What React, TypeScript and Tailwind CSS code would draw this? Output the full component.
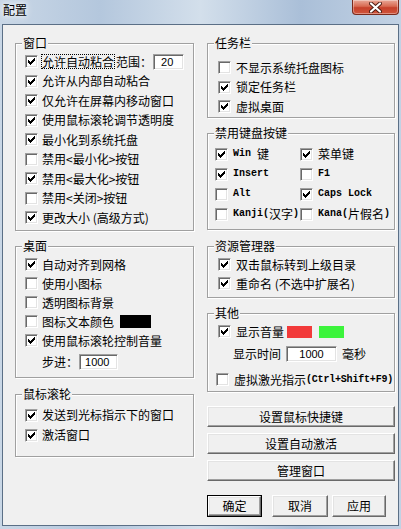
import React from "react";

const mono = "font-['Liberation_Mono','Noto_Sans_CJK_SC',monospace] text-[10px] font-bold";

const Check = ({ checked }: { checked?: boolean }) => (
    <span className="flex h-[13px] w-[13px] shrink-0 items-center justify-center border border-t-[#a0a0a0] border-l-[#a0a0a0] border-b-white border-r-white bg-white shadow-[inset_1px_1px_0_#696969,inset_-1px_-1px_0_#e3e3e3]">
        {checked && (
            <svg width="7" height="7" viewBox="0 0 7 7" shapeRendering="crispEdges">
                <rect x="0" y="2" width="1" height="3" fill="#000" />
                <rect x="1" y="3" width="1" height="3" fill="#000" />
                <rect x="2" y="4" width="1" height="3" fill="#000" />
                <rect x="3" y="3" width="1" height="3" fill="#000" />
                <rect x="4" y="2" width="1" height="3" fill="#000" />
                <rect x="5" y="1" width="1" height="3" fill="#000" />
                <rect x="6" y="0" width="1" height="3" fill="#000" />
            </svg>
        )}
    </span>
);

const Row = ({
    checked,
    children,
    className = "",
    gap = "gap-[4px]",
}: {
    checked?: boolean;
    children: React.ReactNode;
    className?: string;
    gap?: string;
}) => (
    <div className={`flex items-center ${gap} ${className}`}>
        <Check checked={checked} />
        <span className="flex items-center whitespace-nowrap">{children}</span>
    </div>
);

const Group = ({
    title,
    className = "",
    children,
}: {
    title: string;
    className?: string;
    children: React.ReactNode;
}) => (
    <div
        className={`relative border border-[#a0a0a0] shadow-[inset_1px_1px_0_#fff,1px_1px_0_#fff] ${className}`}
    >
        <span className="absolute left-[6px] top-[-7px] bg-[#f0f0f0] px-[1px] leading-[12px]">
            {title}
        </span>
        {children}
    </div>
);

const TextBox = ({ value, className = "" }: { value: string; className?: string }) => (
    <span
        className={`flex h-[16px] items-center border border-t-[#a0a0a0] border-l-[#a0a0a0] border-b-white border-r-white bg-white font-['Liberation_Sans',sans-serif] text-[11px] shadow-[inset_1px_1px_0_#696969,inset_-1px_-1px_0_#e3e3e3] ${className}`}
    >
        {value}
    </span>
);

const Button = ({
    children,
    className = "",
    isDefault,
}: {
    children: React.ReactNode;
    className?: string;
    isDefault?: boolean;
}) => (
    <div className={`${isDefault ? "border border-black" : ""} ${className}`}>
        <div className="flex h-full w-full items-center justify-center border border-t-white border-l-white border-b-[#696969] border-r-[#696969] bg-[#f0f0f0] shadow-[inset_-1px_-1px_0_#a0a0a0,inset_1px_1px_0_#e3e3e3]">
            {children}
        </div>
    </div>
);

const CloseButton = () => (
    <div className="flex h-[15px] w-[47px] items-center justify-center rounded-b-[4px] border border-t-0 border-[#7a2a1c] bg-[linear-gradient(180deg,#e9a898_0%,#d86a52_45%,#c6402a_55%,#d0553c_100%)] shadow-[inset_0_0_0_1px_rgba(255,255,255,0.35)]">
        <svg width="13" height="11" viewBox="0 0 13 11">
            <path d="M2 1.5 L11 9.5 M11 1.5 L2 9.5" stroke="#4a1a12" strokeWidth="4" strokeLinecap="round" />
            <path d="M2 1.5 L11 9.5 M11 1.5 L2 9.5" stroke="#fff" strokeWidth="2.2" strokeLinecap="round" />
        </svg>
    </div>
);

export default function App() {
    return (
        <div className="flex h-[529px] w-[401px] flex-col bg-[linear-gradient(90deg,#c9d7e6_0%,#b4c7dd_25%,#d3dfeb_50%,#aabfd8_75%,#c2d2e4_100%)] font-['Noto_Sans_CJK_SC',sans-serif] text-[12px] leading-[12px] text-black">
            <div className="flex h-[24px] shrink-0 items-start justify-between pl-[3px] pr-[2px]">
                <span className="mt-[4px] text-[12px] [text-shadow:0_0_5px_#fff,0_0_8px_#fff]">配置</span>
                <CloseButton />
            </div>

            <div className="mx-[2px] mb-[3px] flex flex-1 border border-[#5b6f86] bg-[#f0f0f0]">
                {/* left column */}
                <div className="ml-[12px] flex w-[179px] flex-col">
                    <Group title="窗口" className="mt-[18px] h-[188px] pl-[9px] pt-[8px]">
                        <div className="flex h-[19.5px] items-center">
                            <Check checked />
                            <span className="ml-[3px] border border-dotted border-black leading-[13px] whitespace-nowrap">
                                允许自动粘合
                            </span>
                            <span className="ml-[1px] whitespace-nowrap">范围：</span>
                            <TextBox value="20" className="ml-[1px] w-[31px] pl-[7px]" />
                        </div>
                        <Row checked className="h-[19.5px]">允许从内部自动粘合</Row>
                        <Row checked className="h-[19.5px]">仅允许在屏幕内移动窗口</Row>
                        <Row checked className="h-[19.5px]">使用鼠标滚轮调节透明度</Row>
                        <Row checked className="h-[19.5px]">最小化到系统托盘</Row>
                        <Row className="h-[19.5px]">禁用&lt;最小化&gt;按钮</Row>
                        <Row checked className="h-[19.5px]">禁用&lt;最大化&gt;按钮</Row>
                        <Row className="h-[19.5px]">禁用&lt;关闭&gt;按钮</Row>
                        <Row checked className="h-[19.5px]">更改大小 (高级方式)</Row>
                    </Group>

                    <Group title="桌面" className="mt-[15px] h-[132px] pl-[9px] pt-[8px]">
                        <Row checked className="h-[19px]">自动对齐到网格</Row>
                        <Row className="h-[19px]">使用小图标</Row>
                        <Row className="h-[19px]">透明图标背景</Row>
                        <Row className="h-[19px]">
                            图标文本颜色
                            <span className="ml-[6px] h-[13px] w-[31px] bg-black" />
                        </Row>
                        <Row checked className="h-[19px]">使用鼠标滚轮控制音量</Row>
                        <div className="flex h-[24px] items-center pl-[17px]">
                            <span className="whitespace-nowrap">步进：</span>
                            <TextBox value="1000" className="ml-[1px] w-[39px] pl-[5px]" />
                        </div>
                    </Group>

                    <Group title="鼠标滚轮" className="mt-[16px] h-[63px] pl-[9px] pt-[10px]">
                        <Row checked className="h-[20px]">发送到光标指示下的窗口</Row>
                        <Row checked className="h-[20px]">激活窗口</Row>
                    </Group>
                </div>

                {/* right column */}
                <div className="ml-[13px] flex w-[188px] flex-col">
                    <Group title="任务栏" className="mt-[18px] h-[75px] pl-[10px] pt-[14px]">
                        <Row gap="gap-[5px]" className="h-[19.5px]">不显示系统托盘图标</Row>
                        <Row gap="gap-[5px]" checked className="h-[19.5px]">锁定任务栏</Row>
                        <Row gap="gap-[5px]" checked className="h-[19.5px]">虚拟桌面</Row>
                    </Group>

                    <Group title="禁用键盘按键" className="mt-[15px] h-[97px] pl-[7px] pt-[10px]">
                        <div className="grid grid-cols-[85px_1fr] auto-rows-[20px]">
                            <Row gap="gap-[5px]" checked>
                                <span className={mono}>Win&nbsp;</span>键
                            </Row>
                            <Row gap="gap-[5px]" checked>菜单键</Row>
                            <Row gap="gap-[5px]" checked>
                                <span className={mono}>Insert</span>
                            </Row>
                            <Row gap="gap-[5px]">
                                <span className={mono}>F1</span>
                            </Row>
                            <Row gap="gap-[5px]">
                                <span className={mono}>Alt</span>
                            </Row>
                            <Row gap="gap-[5px]" checked>
                                <span className={mono}>Caps Lock</span>
                            </Row>
                            <Row gap="gap-[5px]">
                                <span className={mono}>Kanji(</span>汉字<span className={mono}>)</span>
                            </Row>
                            <Row gap="gap-[5px]">
                                <span className={mono}>Kana(</span>片假名<span className={mono}>)</span>
                            </Row>
                        </div>
                    </Group>

                    <Group title="资源管理器" className="mt-[16px] h-[52px] pl-[10px] pt-[8px]">
                        <Row gap="gap-[5px]" checked className="h-[19px]">双击鼠标转到上级目录</Row>
                        <Row gap="gap-[5px]" checked className="h-[19px]">重命名 (不选中扩展名)</Row>
                    </Group>

                    <Group title="其他" className="mt-[15px] h-[79px] pt-[8px]">
                        <Row gap="gap-[5px]" checked className="h-[19px] pl-[10px]">
                            显示音量
                            <span className="ml-[3px] h-[12px] w-[25px] bg-[#f23a3a]" />
                            <span className="ml-[7px] h-[12px] w-[25px] bg-[#3cf43c]" />
                        </Row>
                        <div className="mt-[2px] flex h-[22px] items-center pl-[25px]">
                            <span className="whitespace-nowrap">显示时间</span>
                            <TextBox value="1000" className="ml-[5px] w-[51px] justify-center" />
                            <span className="ml-[5px] whitespace-nowrap">毫秒</span>
                        </div>
                        <Row gap="gap-[5px]" className="mt-[5px] h-[19px] pl-[8px]">
                            虚拟激光指示<span className={`${mono} tracking-[-0.2px]`}>(Ctrl+Shift+F9)</span>
                        </Row>
                    </Group>

                    <Button className="mt-[14px] h-[21px]">设置鼠标快捷键</Button>
                    <Button className="mt-[6px] h-[21px]">设置自动激活</Button>
                    <Button className="mt-[6px] h-[21px]">管理窗口</Button>

                    <div className="mt-[14px] flex h-[22px]">
                        <Button isDefault className="w-[55px]">确定</Button>
                        <Button className="ml-[10px] w-[56px]">取消</Button>
                        <Button className="ml-[4px] w-[54px]">应用</Button>
                    </div>
                </div>
            </div>
        </div>
    );
}
